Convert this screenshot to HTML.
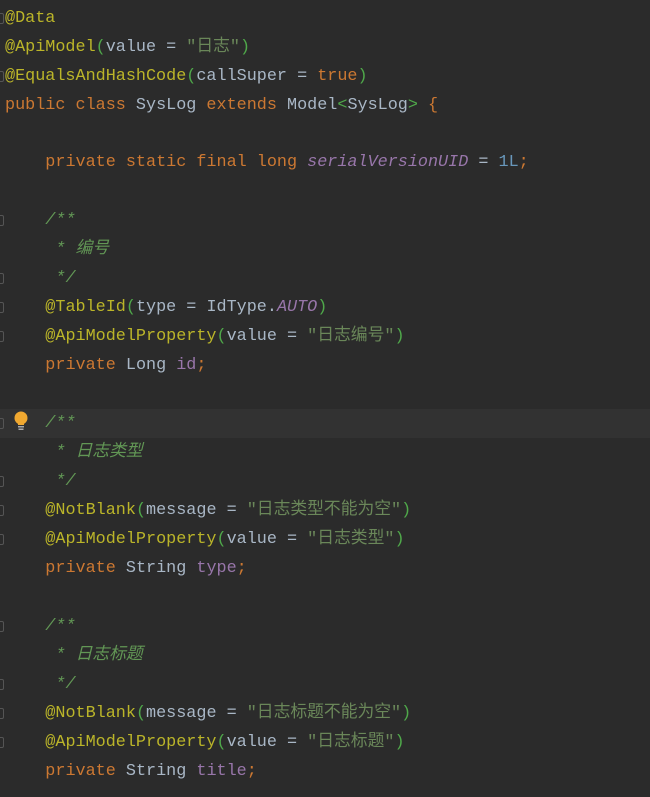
<!DOCTYPE html>
<html><head><meta charset="utf-8"><style>
body{margin:0;background:#2b2b2b;width:650px;height:797px;overflow:hidden;position:relative}
.l{position:absolute;left:5px;height:29px;line-height:29px;white-space:pre;font-family:"Liberation Mono","Noto Sans CJK SC",monospace;font-size:16.8px;color:#a9b7c6}
.a{color:#bbb529}.k{color:#cc7832}.s{color:#6a8759}.c{color:#629755;font-style:italic}.f{color:#9876aa}.fi{color:#9876aa;font-style:italic}.p{color:#4fa84a}.n{color:#6897bb}
.hl{position:absolute;left:0;top:409px;width:650px;height:29px;background:#323232}
.fm{position:absolute;left:-3px;width:5px;height:9px;border:1px solid #555;border-radius:2px}
</style></head><body>
<div class="hl"></div>
<div class="fm" style="top:13px"></div><div class="fm" style="top:71px"></div>
<div class="fm" style="top:215px"></div><div class="fm" style="top:273px"></div><div class="fm" style="top:302px"></div><div class="fm" style="top:331px"></div>
<div class="fm" style="top:418px"></div><div class="fm" style="top:476px"></div><div class="fm" style="top:505px"></div><div class="fm" style="top:534px"></div>
<div class="fm" style="top:621px"></div><div class="fm" style="top:679px"></div><div class="fm" style="top:708px"></div><div class="fm" style="top:737px"></div>
<svg style="position:absolute;left:13px;top:411px" width="16" height="20" viewBox="0 0 16 20"><circle cx="8" cy="7" r="6.5" fill="#f0a830"/><rect x="5" y="12" width="6" height="2" fill="#f0a830"/><rect x="5" y="15" width="6" height="1.5" fill="#aaa"/><rect x="5.5" y="17.5" width="5" height="1.5" fill="#aaa"/></svg>
<div class="l" style="top:4px"><span class="a">@Data</span></div>
<div class="l" style="top:33px"><span class="a">@ApiModel</span><span class="p">(</span>value = <span class="s">"日志"</span><span class="p">)</span></div>
<div class="l" style="top:62px"><span class="a">@EqualsAndHashCode</span><span class="p">(</span>callSuper = <span class="k">true</span><span class="p">)</span></div>
<div class="l" style="top:91px"><span class="k">public class </span>SysLog <span class="k">extends </span>Model<span class="p">&lt;</span>SysLog<span class="p">&gt;</span> <span class="k">{</span></div>
<div class="l" style="top:148px">    <span class="k">private static final long </span><span class="fi">serialVersionUID</span> = <span class="n">1L</span><span class="k">;</span></div>
<div class="l" style="top:206px">    <span class="c">/**</span></div>
<div class="l" style="top:235px">    <span class="c"> * 编号</span></div>
<div class="l" style="top:264px">    <span class="c"> */</span></div>
<div class="l" style="top:293px">    <span class="a">@TableId</span><span class="p">(</span>type = IdType.<span class="fi">AUTO</span><span class="p">)</span></div>
<div class="l" style="top:322px">    <span class="a">@ApiModelProperty</span><span class="p">(</span>value = <span class="s">"日志编号"</span><span class="p">)</span></div>
<div class="l" style="top:351px">    <span class="k">private </span>Long <span class="f">id</span><span class="k">;</span></div>
<div class="l" style="top:409px">    <span class="c">/**</span></div>
<div class="l" style="top:438px">    <span class="c"> * 日志类型</span></div>
<div class="l" style="top:467px">    <span class="c"> */</span></div>
<div class="l" style="top:496px">    <span class="a">@NotBlank</span><span class="p">(</span>message = <span class="s">"日志类型不能为空"</span><span class="p">)</span></div>
<div class="l" style="top:525px">    <span class="a">@ApiModelProperty</span><span class="p">(</span>value = <span class="s">"日志类型"</span><span class="p">)</span></div>
<div class="l" style="top:554px">    <span class="k">private </span>String <span class="f">type</span><span class="k">;</span></div>
<div class="l" style="top:612px">    <span class="c">/**</span></div>
<div class="l" style="top:641px">    <span class="c"> * 日志标题</span></div>
<div class="l" style="top:670px">    <span class="c"> */</span></div>
<div class="l" style="top:699px">    <span class="a">@NotBlank</span><span class="p">(</span>message = <span class="s">"日志标题不能为空"</span><span class="p">)</span></div>
<div class="l" style="top:728px">    <span class="a">@ApiModelProperty</span><span class="p">(</span>value = <span class="s">"日志标题"</span><span class="p">)</span></div>
<div class="l" style="top:757px">    <span class="k">private </span>String <span class="f">title</span><span class="k">;</span></div>
</body></html>
